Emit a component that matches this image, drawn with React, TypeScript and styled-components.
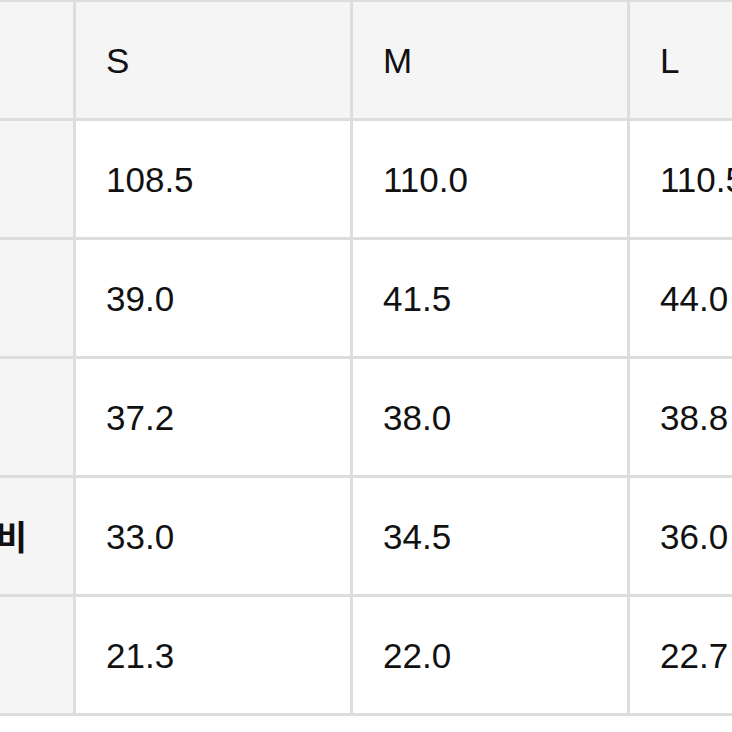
import React from "react";
import styled, { createGlobalStyle } from "styled-components";

const Global = createGlobalStyle`
  html, body {
    margin: 0;
    padding: 0;
    background: #ffffff;
    overflow: hidden;
  }
  body {
    font-family: "Liberation Sans", Arial, "Noto Sans CJK KR", sans-serif;
    color: #111111;
  }
`;

const Page = styled.div`
  width: 732px;
  height: 732px;
  overflow: hidden;
  background: #ffffff;
`;

const Grid = styled.div`
  display: grid;
  grid-template-columns: repeat(4, 274px);
  grid-auto-rows: 116px;
  gap: 3px;
  padding: 3px;
  background: #dddddd;
  width: max-content;
  margin: -1px 0 0 -204px;
`;

const Cell = styled.div<{ $tone: "head" | "label" | "data" }>`
  display: flex;
  align-items: center;
  padding-left: ${(p) => (p.$tone === "label" ? "64px" : "30px")};
  box-sizing: border-box;
  font-size: 35px;
  line-height: 1;
  background: ${(p) => (p.$tone === "data" ? "#ffffff" : "#f5f5f5")};
  white-space: nowrap;
`;

const Label = styled.span`
  font-family: "Noto Sans CJK KR", "Liberation Sans", sans-serif;
  font-weight: 700;
  font-size: 34px;
  color: #111111;
`;

const sizes = ["S", "M", "L"];
const rows: { label: string; values: string[] }[] = [
  { label: "총장", values: ["108.5", "110.0", "110.5"] },
  { label: "허리", values: ["39.0", "41.5", "44.0"] },
  { label: "엉덩이", values: ["37.2", "38.0", "38.8"] },
  { label: "허벅지 너비", values: ["33.0", "34.5", "36.0"] },
  { label: "밑단", values: ["21.3", "22.0", "22.7"] },
];

export default function App() {
  return (
    <Page>
      <Global />
      <Grid>
        <Cell $tone="head" />
        {sizes.map((s) => (
          <Cell key={s} $tone="head">
            {s}
          </Cell>
        ))}
        {rows.map((r) => (
          <React.Fragment key={r.label}>
            <Cell $tone="label">
              <Label>{r.label}</Label>
            </Cell>
            {r.values.map((v, i) => (
              <Cell key={i} $tone="data">
                {v}
              </Cell>
            ))}
          </React.Fragment>
        ))}
      </Grid>
    </Page>
  );
}
